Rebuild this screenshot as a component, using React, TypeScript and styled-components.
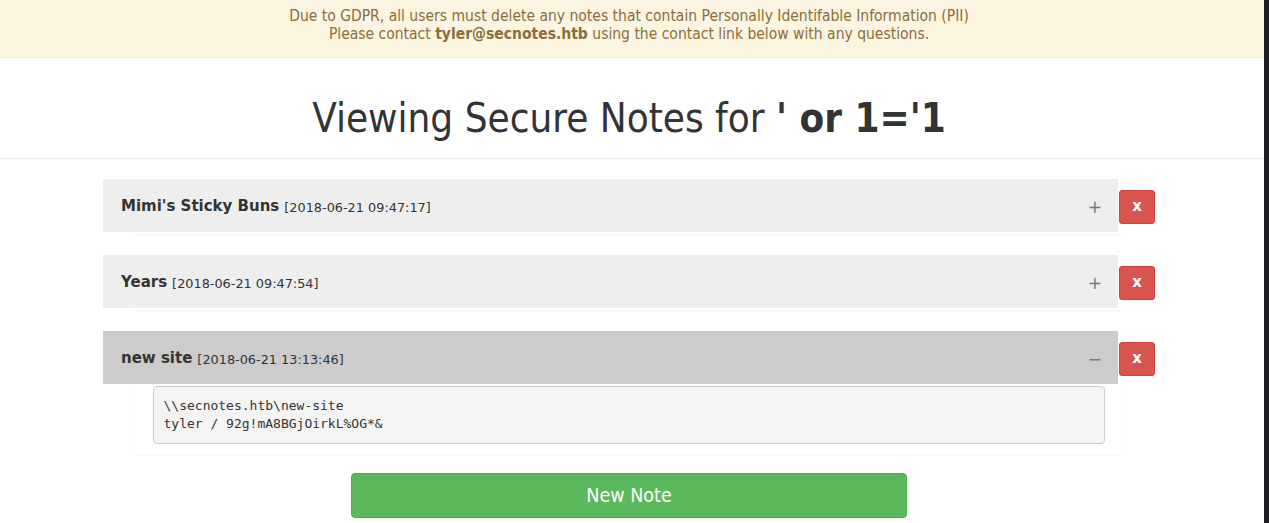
import { FC } from "react";
import styled, { createGlobalStyle } from "styled-components";

type Note = {
  title: string;
  date: string;
  body?: string;
};

const notes: Note[] = [
  { title: "Mimi's Sticky Buns", date: "2018-06-21 09:47:17" },
  { title: "Years", date: "2018-06-21 09:47:54" },
  {
    title: "new site",
    date: "2018-06-21 13:13:46",
    body: "\\\\secnotes.htb\\new-site\ntyler / 92g!mA8BGjOirkL%OG*&",
  },
];

const GlobalStyle = createGlobalStyle`
  html, body {
    margin: 0;
    padding: 0;
    background: #fff;
  }
  body {
    font-family: "DejaVu Sans Condensed", "DejaVu Sans", sans-serif;
    font-size: 14px;
    color: #333;
  }
`;

const SPage = styled.div`
  display: flex;
  min-height: 523px;
`;
const SMain = styled.div`
  flex: 1;
  padding-right: 6px;
`;
const SEdge = styled.div`
  width: 5px;
  background: #1d1f25;
`;
const SBanner = styled.div`
  background: #fcf5e1;
  border-bottom: 1px solid #faebcc;
  color: #8a6d3b;
  text-align: center;
  font-size: 15.5px;
  line-height: 17.5px;
  height: 58px;
  box-sizing: border-box;
  padding: 8px 6px 0 0;
  margin-right: -6px;
  & b {
    font-weight: bold;
  }
`;
const SHeader = styled.div`
  border-bottom: 1px solid #eee;
  height: 101px;
  display: flex;
  align-items: center;
  justify-content: center;
  padding: 20px 6px 0 0;
  box-sizing: border-box;
  margin-right: -6px;
`;
const STitle = styled.h1`
  margin: 0;
  font-size: 40px;
  font-weight: normal;
  color: #333;
  & b {
    font-weight: bold;
  }
`;
const SContainer = styled.div`
  width: 1052px;
  margin: 20px auto 0;
`;
const SRow = styled.div`
  display: grid;
  grid-template-columns: 1015px 36px;
  column-gap: 1px;
  align-items: start;
  margin-bottom: 21px;
`;
const SPanel = styled.div``;
const SPanelHeading = styled.div<{ $open: boolean }>`
  height: 53px;
  box-sizing: border-box;
  background: ${(p) => (p.$open ? "#cccccc" : "#eeeeee")};
  display: flex;
  align-items: center;
  padding: 2px 18px 0;
  font-family: "DejaVu Sans", sans-serif;
`;
const SNoteTitle = styled.span`
  font-size: 15px;
  font-weight: bold;
  color: #333;
  margin-right: 5px;
  padding-bottom: 2px;
`;
const SDate = styled.span`
  font-size: 12.85px;
  color: #333;
  padding-top: 1px;
`;
const SToggle = styled.span`
  margin-left: auto;
  margin-right: -2px;
  color: #777;
  font-size: 17px;
  font-family: "DejaVu Sans", sans-serif;
`;
const SBody = styled.div<{ $open: boolean }>`
  margin-left: 31px;
  width: 988px;
  border-radius: 0 0 4px 4px;
  box-shadow: 0 1px 2px rgba(0, 0, 0, 0.06);
  min-height: 2px;
  padding: ${(p) => (p.$open ? "2px 17px 10px 19px" : "0")};
  box-sizing: border-box;
`;
const SPre = styled.pre`
  margin: 0;
  background: #f4f4f4;
  border: 1px solid #ccc;
  border-radius: 4px;
  padding: 9.5px;
  font-family: "DejaVu Sans Mono", monospace;
  font-size: 13px;
  line-height: 18.5px;
  color: #333;
  white-space: pre-wrap;
`;
const SDeleteButton = styled.button`
  margin-top: 11px;
  width: 36px;
  height: 34px;
  background: #d9534f;
  border: 1px solid #d43f3a;
  border-radius: 3px;
  color: #fff;
  font-family: "DejaVu Sans", sans-serif;
  font-weight: bold;
  font-size: 15px;
  padding: 0 0 2px;
  cursor: pointer;
`;
const SNewNote = styled.button`
  display: block;
  width: 556px;
  height: 45px;
  margin: -2px auto 0;
  background: #5cb85c;
  border: 1px solid #4cae4c;
  border-radius: 4px;
  color: #fff;
  font-family: "DejaVu Sans Condensed", "DejaVu Sans", sans-serif;
  font-size: 19.5px;
  cursor: pointer;
`;

const NoteRow: FC<{ note: Note }> = ({ note }) => {
  const open = !!note.body;
  return (
    <SRow>
      <SPanel>
        <SPanelHeading $open={open}>
          <SNoteTitle>{note.title}</SNoteTitle>
          <SDate>[{note.date}]</SDate>
          <SToggle>{open ? "−" : "+"}</SToggle>
        </SPanelHeading>
        <SBody $open={open}>{open && <SPre>{note.body}</SPre>}</SBody>
      </SPanel>
      <SDeleteButton>x</SDeleteButton>
    </SRow>
  );
};

export default function App() {
  return (
    <>
      <GlobalStyle />
      <SPage>
        <SMain>
          <SBanner>
            Due to GDPR, all users must delete any notes that contain Personally Identifable Information (PII)
            <br />
            Please contact <b>tyler@secnotes.htb</b> using the contact link below with any questions.
          </SBanner>
          <SHeader>
            <STitle>
              Viewing Secure Notes for <b>' or 1='1</b>
            </STitle>
          </SHeader>
          <SContainer>
            {notes.map((note) => (
              <NoteRow key={note.title} note={note} />
            ))}
            <SNewNote>New Note</SNewNote>
          </SContainer>
        </SMain>
        <SEdge />
      </SPage>
    </>
  );
}
